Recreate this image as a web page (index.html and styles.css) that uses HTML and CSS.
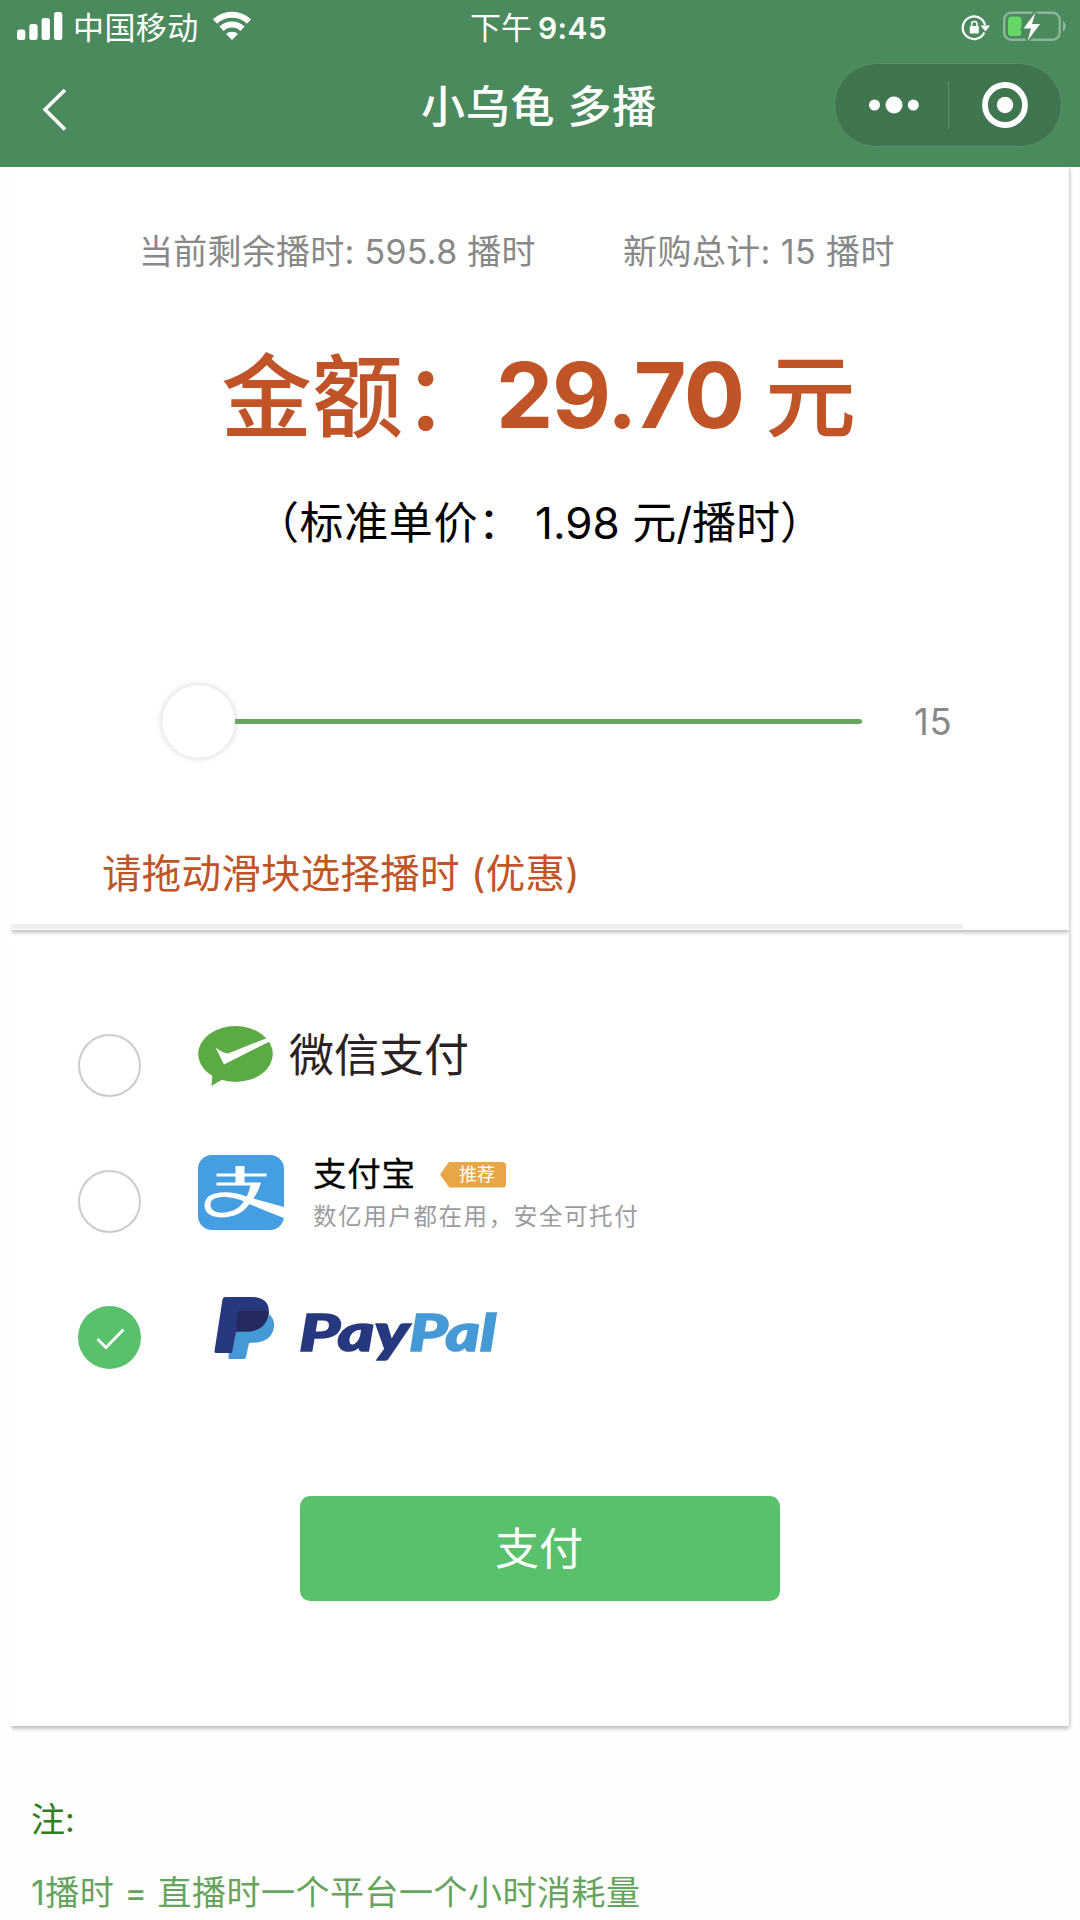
FILE: index.html
```html
<!DOCTYPE html>
<html lang="zh-CN">
<head>
<meta charset="utf-8">
<title>小乌龟 多播</title>
<link rel="stylesheet" href="styles.css">
</head>
<body>
<header class="header">
  <div class="status">
    <div class="status-left">
      <svg class="signal" viewBox="0 0 46 30" fill="#fff"><rect x="0" y="18.500" width="8.300" height="10.500" rx="2.500"/><rect x="12.300" y="13" width="8.300" height="16" rx="2.500"/><rect x="24.600" y="7" width="8.300" height="22" rx="2.500"/><rect x="37" y="1" width="8.300" height="28" rx="2.500"/></svg>
      <span class="carrier">中国移动</span>
      <svg class="wifi" viewBox="0 0 40 30"><path d="M3 10.500C12.500 1.400 27.500 1.400 37 10.500M9.500 17.800c6-5.600 15-5.600 21 0" fill="none" stroke="#fff" stroke-width="6"/><path d="M20 29l-6-6c3.300-3 8.700-3 12 0z" fill="#fff"/></svg>
    </div>
    <div class="clock">下午<span class="clock-time">9:45</span></div>
    <div class="status-right">
      <svg class="lock" viewBox="0 0 30 28"><path d="M23.300 18.500A11.300 11.300 0 1 1 24 11" fill="none" stroke="#fff" stroke-width="2.200"/><path d="M19.500 11.500h9.500l-4.500 6z" fill="#fff"/><rect x="8.800" y="12" width="9" height="7.500" rx="0.800" fill="#fff"/><path d="M10.600 12.500v-2.300a2.700 2.700 0 0 1 5.400 0v2.300" fill="none" stroke="#fff" stroke-width="1.500"/></svg>
      <svg class="battery" viewBox="0 0 64 32"><rect x="1.200" y="2.700" width="55.500" height="27" rx="7" fill="none" stroke="#8db599" stroke-width="2.400"/><path d="M60 11c3.800 2 3.800 8.500 0 10.500z" fill="#8db599"/><rect x="5" y="6.500" width="13.500" height="19.500" rx="3.500" fill="#65d667"/><path d="M32.500 2.500L20.500 18.500h7.500L24.500 31 37 14h-8z" fill="#fff" stroke="#4a8a5c" stroke-width="4" paint-order="stroke"/></svg>
    </div>
  </div>
  <div class="nav">
    <svg class="back" viewBox="0 0 30 50"><path d="M26 5L6 24.500l20 20" fill="none" stroke="#fff" stroke-width="3.600"/></svg>
    <h1 class="title">小乌龟 多播</h1>
    <div class="capsule">
      <svg class="more" viewBox="0 0 50 20" fill="#fff"><circle cx="5.500" cy="10" r="5.500"/><circle cx="25" cy="10" r="8.500"/><circle cx="44.300" cy="10" r="5.500"/></svg>
      <span class="capsule-line"></span>
      <svg class="ring" viewBox="0 0 46 46"><circle cx="23" cy="23" r="20" fill="none" stroke="#fff" stroke-width="5.800"/><circle cx="23" cy="23" r="8.200" fill="#fff"/></svg>
    </div>
  </div>
</header>
<main>
  <section class="card order">
    <div class="summary"><span class="remain">当前剩余播时: 595.8 播时</span><span class="total">新购总计: 15 播时</span></div>
    <div class="amount"><span class="cjk">金额：</span><span class="num">29.70</span><span class="cjk">元</span></div>
    <div class="unit"><span class="unit-label">（标准单价：</span><span>1.98 元/播时）</span></div>
    <div class="slider"><span class="thumb"></span><span class="track"></span><span class="value">15</span></div>
    <p class="hint">请拖动滑块选择播时 (优惠)</p>
    <div class="strip"></div>
  </section>
  <section class="card pay">
    <div class="option">
      <span class="radio"></span>
      <svg class="wechat" viewBox="0 0 75 60"><ellipse cx="37.500" cy="28" rx="37.300" ry="28" fill="#5bab45"/><path d="M14.500 48L13.500 60 25 53z" fill="#5bab45"/><path d="M17.500 21.500C21 24 25 27 30 27.500L69 12l2.500 3.500L26 38.500z" fill="#fff"/></svg>
      <span class="wechat-name">微信支付</span>
    </div>
    <div class="option">
      <span class="radio"></span>
      <svg class="alipay" viewBox="0 0 86 75"><rect width="86" height="75" rx="14" fill="#469ee2"/><path d="M37.500 11h9v7.500h22v3H46.500v6H63C60 38 54 47 46 55 35 65 7 66 6.500 51 6 34 33 35 50 42L86 52v11C70 57 61 53 50 48.500 37 41 12 38.500 12.500 50 13 61 34 59 42 51 47 46 51 38 52.500 30.500H18.500v-3h19v-6H18.500v-3h19z" fill="#fff"/></svg>
      <div class="alipay-text">
        <div class="alipay-line"><span class="alipay-name">支付宝</span><span class="badge">推荐</span></div>
        <div class="alipay-sub">数亿用户都在用，安全可托付</div>
      </div>
    </div>
    <div class="option">
      <span class="radio checked"><svg viewBox="0 0 63 63"><path d="M19.500 33l8.500 8.500L45.500 23.500" fill="none" stroke="#fff" stroke-width="2.800"/></svg></span>
      <svg class="paypal" viewBox="0 0 285 70"><path d="M19 16H52C60 19 63 27 60 35 57 44 48 47 36 47L33 61q-.4 2-2.400 2H17q-2 0-1.500-2z" fill="#459ad6"/><path d="M12 1H39C53 1 58 10 55 20 52 32 43 36 31 35.500H23L19 57H3Q1.300 57 1.500 55L9.500 3.500Q10 1 12 1z" fill="#27387f"/><path d="M26 15H55.700C55.500 28 47 36 31 35.500H23L24.500 17z" fill="#24295f"/><g class="paypal-word"><text x="86" y="54.500" textLength="110" lengthAdjust="spacingAndGlyphs" fill="#27387f" stroke="#27387f">Pay</text><text x="196" y="54.500" textLength="87" lengthAdjust="spacingAndGlyphs" fill="#459ad6" stroke="#459ad6">Pal</text></g></svg>
    </div>
    <button class="submit">支付</button>
  </section>
  <section class="notes">
    <p class="notes-title">注:</p>
    <p class="notes-text">1播时 = 直播时一个平台一个小时消耗量</p>
  </section>
</main>
</body>
</html>
```
FILE: styles.css
```css
* { box-sizing: border-box; }
body {
  margin: 0;
  width: 1080px;
  height: 1920px;
  overflow: hidden;
  background: #fefefe;
  font-family: Inter, "Noto Sans CJK SC", sans-serif;
}
h1, p { margin: 0; font-weight: 400; }
svg { display: block; flex: none; }
span, p, h1 { white-space: pre; }

.header { height: 167px; background: #4a8a5c; color: #fff; }
.status {
  height: 54px;
  display: grid;
  grid-template-columns: 470px 1fr 119px;
  align-items: start;
}
.status-left { display: flex; padding: 11px 0 0 17px; }
.signal { width: 46px; height: 30px; }
.carrier { margin-left: 10px; font-size: 31px; line-height: 34px; letter-spacing: .4px; }
.wifi { width: 40px; height: 30px; margin-left: 13px; }
.clock { font-size: 31px; line-height: 34px; padding-top: 11px; }
.clock-time { margin-left: 6px; font-weight: 600; font-size: 30px; letter-spacing: .4px; }
.status-right { display: flex; padding-top: 10px; }
.lock { width: 30px; height: 28px; margin: 4px 0 0; }
.battery { width: 64px; height: 32px; margin-left: 12px; }
.nav {
  display: grid;
  grid-template-columns: 421px 1fr 246px;
  align-items: start;
}
.back { width: 30px; height: 50px; margin: 31px 0 0 39px; }
.title { font-size: 44px; line-height: 50px; font-weight: 500; padding-top: 28px; letter-spacing: .7px; }
.capsule {
  width: 228px;
  height: 84px;
  margin-top: 9px;
  border: 1.500px solid #5a9069;
  border-radius: 42px;
  background: #3f754f;
  display: flex;
  align-items: center;
  padding-left: 34px;
}
.more { width: 50px; height: 20px; }
.capsule-line { width: 1px; height: 48px; margin-left: 29px; background: #5f8f6c; }
.ring { width: 46px; height: 46px; margin-left: 33px; }

.card {
  position: relative;
  width: 1058px;
  margin-left: 11px;
  background: #fff;
  box-shadow: 0 3px 4px rgba(0, 0, 0, .22), 1px 0 3px rgba(0, 0, 0, .12);
  clip-path: inset(0 -11px -12px 0);
}
.order { z-index: 1; height: 763px; padding-top: 65px; }
.summary { display: flex; padding-left: 128px; font-size: 34px; line-height: 40px; color: #888; }
.remain { width: 484px; letter-spacing: .27px; }
.total { letter-spacing: .4px; }
.amount {
  display: flex;
  margin-top: 73px;
  padding-left: 210px;
  color: #c05427;
  font-size: 91px;
  line-height: 100px;
}
.cjk { font-weight: 500; padding-top: 2px; }
.num { font-weight: 700; width: 271px; padding-left: 2px; letter-spacing: -1.400px; }
.unit { display: flex; margin-top: 51px; padding-left: 244px; font-size: 44px; line-height: 50px; color: #000; }
.unit-label { width: 280px; letter-spacing: .6px; }
.slider { display: flex; align-items: center; height: 74px; margin-top: 136px; padding-left: 151px; }
.thumb {
  width: 73px;
  height: 73px;
  border-radius: 50%;
  background: #fff;
  box-shadow: 0 0 6px rgba(0, 0, 0, .2);
}
.track { width: 627px; height: 5px; border-radius: 0 3px 3px 0; background: #67a560; }
.value { margin-left: 52px; padding-top: 2px; font-size: 36.500px; line-height: 40px; letter-spacing: .6px; color: #888; }
.hint { margin-top: 93px; padding-left: 91px; font-size: 39.500px; line-height: 46px; letter-spacing: .25px; color: #bf5427; }
.strip { width: 952px; height: 5px; margin-top: 27px; background: #efefef; }

.pay { height: 796px; padding: 81px 0 0 67px; }
.option { display: flex; height: 135.500px; }
.radio {
  flex: none;
  width: 63px;
  height: 63px;
  margin-top: 23px;
  border: 2px solid #ccc;
  border-radius: 50%;
}
.checked { margin-top: 24px; border: 0; background: #59c06b; }
.wechat { width: 75px; height: 60px; margin: 15px 0 0 57px; }
.wechat-name { margin: 17px 0 0 16px; font-size: 45px; line-height: 56px; color: #2b2223; }
.alipay { width: 86px; height: 75px; margin: 8.500px 0 0 57px; }
.alipay-text { margin: 9px 0 0 29px; }
.alipay-line { display: flex; }
.alipay-name { width: 127px; font-size: 33.500px; line-height: 36px; letter-spacing: .8px; color: #000; -webkit-text-stroke: .3px #000; }
.badge {
  width: 66px;
  height: 26px;
  margin-top: 6px;
  padding-left: 19px;
  border-radius: 4px;
  background: #e8a744;
  clip-path: polygon(0 50%, 14% 0, 100% 0, 100% 100%, 14% 100%);
  color: #fff;
  font-size: 18px;
  line-height: 25px;
}
.alipay-sub { margin-top: 11px; font-size: 23.500px; line-height: 28px; letter-spacing: 1.600px; color: #9c9ca0; white-space: nowrap; }
.paypal { width: 285px; height: 70px; margin: 14px 0 0 72px; }
.paypal-word { font: italic 900 51px Lato, sans-serif; stroke-width: 1.600px; }
.submit {
  display: block;
  width: 480px;
  height: 105px;
  margin: 78px 0 0 222px;
  padding: 2px 2px 0 0;
  border: 0;
  border-radius: 10px;
  background: #59c06b;
  color: #fff;
  font: 44px/103px Inter, "Noto Sans CJK SC", sans-serif;
}
.notes { padding: 74px 0 0 31px; font-size: 34px; }
.notes-title { line-height: 40px; color: #2d7f1e; }
.notes-text { margin-top: 33px; line-height: 40px; letter-spacing: .5px; color: #65a45c; }
```
